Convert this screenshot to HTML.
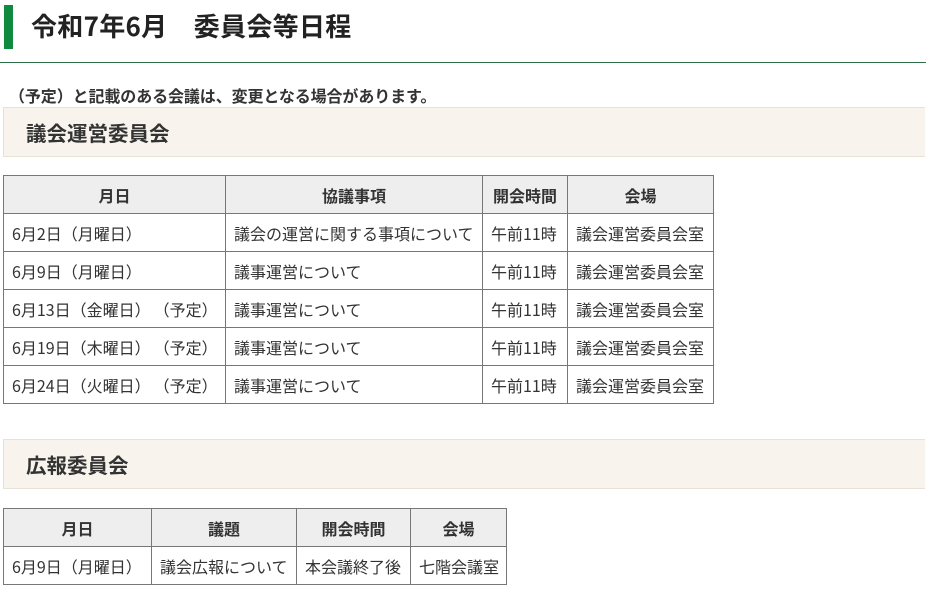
<!DOCTYPE html>
<html><head><meta charset="utf-8"><style>
body{margin:0;background:#fff;font-family:"Noto Sans CJK JP",sans-serif;color:#333;width:926px;height:589px;overflow:hidden;position:relative}
.bar{position:absolute;left:4px;top:5px;width:9px;height:44px;background:#0f8a3f}
h1{position:absolute;left:31px;top:7px;margin:0;font-size:26px;line-height:38px;font-weight:bold;color:#222;letter-spacing:0.3px}
.line{position:absolute;left:0;top:62px;width:926px;height:1px;background:#2c6e48}
.note{position:absolute;left:9px;top:84px;font-size:16px;font-weight:bold;line-height:22px;color:#333;letter-spacing:-0.1px}
.sec{position:absolute;left:3px;width:921px;height:48px;background:#f8f4ed;border:1px solid #e8e2d6;border-right:none}
.sec span{position:absolute;left:22px;top:10px;font-size:20.5px;font-weight:bold;color:#333;line-height:28px}
table{position:absolute;left:3px;border-collapse:collapse;font-size:16px;table-layout:fixed}
td,th{border:1px solid #777;height:37px;padding:0 0 0 8px;white-space:nowrap;color:#333;overflow:hidden;line-height:20px}
th{background:#eee;font-weight:bold;text-align:center;padding:0}
td{text-align:left}
.g{display:inline-block;width:3px}
</style></head><body>
<div class="bar"></div>
<h1>令和7年6月　委員会等日程</h1>
<div class="line"></div>
<div class="note">（予定）と記載のある会議は、変更となる場合があります。</div>
<div class="sec" style="top:107px"><span>議会運営委員会</span></div>
<table style="top:175px;width:710px">
<colgroup><col style="width:222px"><col style="width:257px"><col style="width:85px"><col style="width:146px"></colgroup>
<tr><th>月日</th><th>協議事項</th><th>開会時間</th><th>会場</th></tr>
<tr><td>6月2日（月曜日）</td><td>議会の運営に関する事項について</td><td>午前11時</td><td>議会運営委員会室</td></tr>
<tr><td>6月9日（月曜日）</td><td>議事運営について</td><td>午前11時</td><td>議会運営委員会室</td></tr>
<tr><td>6月13日（金曜日）<span class="g"></span>（予定）</td><td>議事運営について</td><td>午前11時</td><td>議会運営委員会室</td></tr>
<tr><td>6月19日（木曜日）<span class="g"></span>（予定）</td><td>議事運営について</td><td>午前11時</td><td>議会運営委員会室</td></tr>
<tr><td>6月24日（火曜日）<span class="g"></span>（予定）</td><td>議事運営について</td><td>午前11時</td><td>議会運営委員会室</td></tr>
</table>
<div class="sec" style="top:439px"><span>広報委員会</span></div>
<table style="top:508px;width:503px">
<colgroup><col style="width:148px"><col style="width:145px"><col style="width:114px"><col style="width:96px"></colgroup>
<tr><th>月日</th><th>議題</th><th>開会時間</th><th>会場</th></tr>
<tr><td>6月9日（月曜日）</td><td>議会広報について</td><td>本会議終了後</td><td>七階会議室</td></tr>
</table>
</body></html>
